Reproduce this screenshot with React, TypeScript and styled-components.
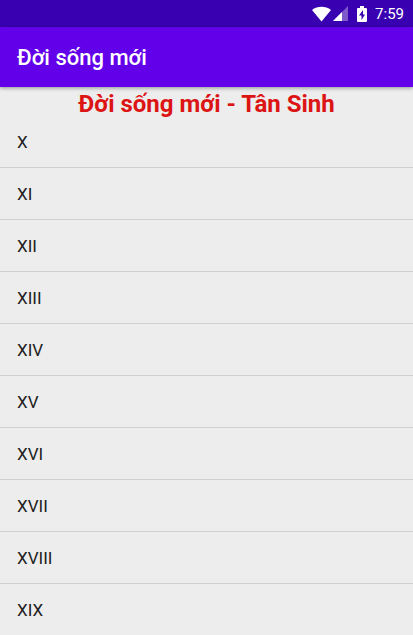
import React from "react";
import styled, { createGlobalStyle } from "styled-components";

const GlobalStyle = createGlobalStyle`
  * {
    box-sizing: border-box;
  }
  body {
    margin: 0;
    background: #ededed;
    font-family: Roboto, "Noto Sans", sans-serif;
  }
`;

const Screen = styled.div`
  display: flex;
  flex-direction: column;
  height: 100vh;
  overflow: hidden;
  background: #ededed;
`;

const StatusBar = styled.div`
  display: flex;
  flex: none;
  align-items: center;
  justify-content: flex-end;
  height: 27px;
  padding-right: 9px;
  background: #3900b1;
  color: #ffffff;
`;

const StatusIcon = styled.svg<{ $gap: number }>`
  display: block;
  flex: none;
  margin-right: ${(p) => p.$gap}px;
`;

const Clock = styled.time`
  font-size: 15px;
  line-height: 20px;
  padding-top: 1px;
`;

const AppBar = styled.header`
  display: flex;
  flex: none;
  align-items: center;
  height: 60px;
  padding: 0 17px;
  background: #6200ea;
  box-shadow: 0 1px 4px rgba(0, 0, 0, 0.4);
  z-index: 1;
`;

const AppTitle = styled.h1`
  margin: 0;
  padding-top: 1px;
  color: #ffffff;
  font-size: 22px;
  font-weight: 500;
  line-height: 28px;
`;

const Heading = styled.h2`
  flex: none;
  margin: 0;
  padding-top: 5px;
  color: #dc1414;
  font-size: 24px;
  font-weight: 700;
  line-height: 24px;
  text-align: center;
`;

const ChapterList = styled.ul`
  flex: 1;
  min-height: 0;
  margin: 0;
  padding: 0;
  overflow: hidden;
  list-style: none;
`;

const ChapterItem = styled.li`
  height: 52px;
  border-bottom: 1px solid #d0d0d0;
`;

const ChapterButton = styled.button`
  display: block;
  width: 100%;
  height: 100%;
  padding: 0 17px;
  border: 0;
  background: transparent;
  color: #212121;
  font-family: inherit;
  font-size: 17px;
  text-align: left;
`;

const chapters = ["X", "XI", "XII", "XIII", "XIV", "XV", "XVI", "XVII", "XVIII", "XIX"];

export default function App() {
  return (
    <>
      <GlobalStyle />
      <Screen>
        <StatusBar>
          <StatusIcon $gap={2} width="19" height="16" viewBox="0 0 19 16" role="img" aria-label="Wi-Fi">
            <path d="M0 4C5.500-0.300 13.500-0.300 19 4L9.500 15.500Z" fill="#fff" />
          </StatusIcon>
          <StatusIcon $gap={9} width="15" height="15" viewBox="0 0 15 15" role="img" aria-label="Mobile signal">
            <path d="M0 15L15 0V15Z" fill="#fff" fillOpacity="0.35" />
            <path d="M0 15L9 6V15Z" fill="#fff" />
          </StatusIcon>
          <StatusIcon $gap={8} width="10" height="16" viewBox="0 0 10 16" role="img" aria-label="Battery charging">
            <path
              d="M3 0H7V2H9Q10 2 10 3V15Q10 16 9 16H1Q0 16 0 15V3Q0 2 1 2H3ZM6 4L2 9.500H4.500V14L8 8.500H6Z"
              fill="#fff"
              fillRule="evenodd"
            />
          </StatusIcon>
          <Clock>7:59</Clock>
        </StatusBar>
        <AppBar>
          <AppTitle>Đời sống mới</AppTitle>
        </AppBar>
        <Heading>Đời sống mới - Tân Sinh</Heading>
        <ChapterList>
          {chapters.map((chapter) => (
            <ChapterItem key={chapter}>
              <ChapterButton type="button">{chapter}</ChapterButton>
            </ChapterItem>
          ))}
        </ChapterList>
      </Screen>
    </>
  );
}
